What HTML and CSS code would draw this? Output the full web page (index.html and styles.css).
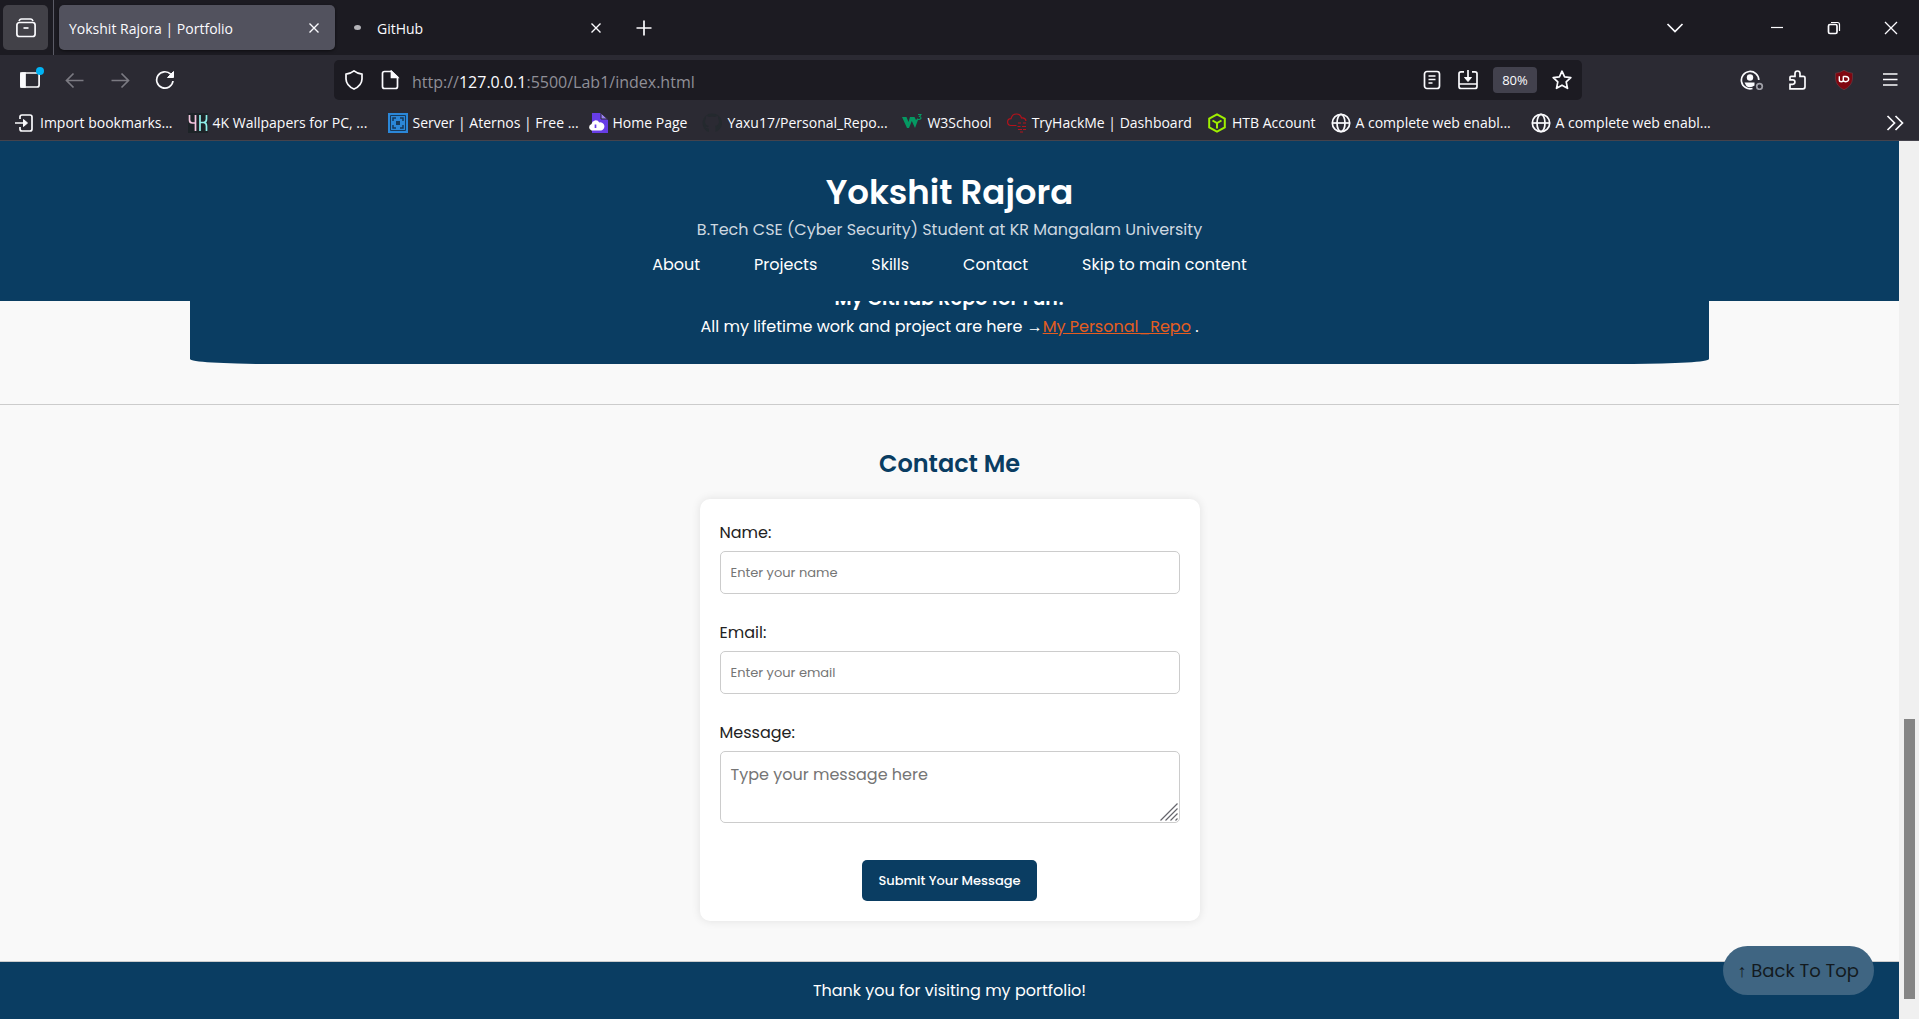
FILE: index.html
```html
<!DOCTYPE html>
<html lang="en">
<head>
<meta charset="utf-8">
<title>Yokshit Rajora | Portfolio</title>
<link rel="stylesheet" href="styles.css">
</head>
<body>
<div class="tabbar">
  <button class="view-btn" aria-label="Recent browsing"><svg class="icon" viewBox="0 0 20 20"><path d="M3 3.200Q3.500 .9 5.500 .9h9Q16.500.9 17 3.200" stroke-width="1.500"/><rect x=".9" y="4.500" width="18.200" height="14" rx="2.500"/><path d="M7.500 10h5"/></svg></button>
  <div class="tab tab-active"><button class="tab-title">Yokshit Rajora | Portfolio</button><button class="tab-close" aria-label="Close tab"><svg class="icon-s" viewBox="0 0 12 12"><path d="M1.500 1.500l9 9M10.500 1.500l-9 9"/></svg></button></div>
  <div class="tab"><span class="tab-dot"></span><button class="tab-title">GitHub</button><button class="tab-close" aria-label="Close tab"><svg class="icon-s" viewBox="0 0 12 12"><path d="M1.500 1.500l9 9M10.500 1.500l-9 9"/></svg></button></div>
  <button class="tool new-tab" aria-label="New tab"><svg class="icon" viewBox="0 0 20 20"><path d="M10 2.500v15M2.500 10h15"/></svg></button>
  <div class="window-controls">
    <button class="tool list-tabs" aria-label="List all tabs"><svg class="icon" viewBox="0 0 20 20"><path d="M2.500 6l7.500 7.500L17.500 6"/></svg></button>
    <button class="tool win" aria-label="Minimize"><svg class="icon" viewBox="0 0 20 20"><path d="M4 9.500h12" stroke-width="1.200"/></svg></button>
    <button class="tool win" aria-label="Restore"><svg class="icon" viewBox="0 0 20 20"><rect x="4.500" y="6.500" width="8.500" height="9" rx="1.500"/><path d="M7 4.500h6.500q2 0 2 2V13" stroke-width="1.200"/></svg></button>
    <button class="tool win" aria-label="Close window"><svg class="icon" viewBox="0 0 20 20"><path d="M4 4l12 12M16 4L4 16" stroke-width="1.300"/></svg></button>
  </div>
</div>

<div class="toolbar">
  <button class="tool sidebar-btn" aria-label="Sidebars"><svg class="icon" viewBox="0 0 20 20"><rect x=".9" y="3" width="18.200" height="14" rx="2"/><path d="M1 3h4v14H1z" fill="currentColor"/></svg><span class="badge-dot"></span></button>
  <button class="tool dim" aria-label="Back"><svg class="icon" viewBox="0 0 20 20"><path d="M18.500 10.500H1.500M8.500 3.500l-7 7 7 7"/></svg></button>
  <button class="tool dim" aria-label="Forward"><svg class="icon" viewBox="0 0 20 20"><path d="M1.500 10.500h17M11.500 3.500l7 7-7 7"/></svg></button>
  <button class="tool" aria-label="Reload"><svg class="icon" viewBox="0 0 20 20"><path d="M18 11a8.200 8.200 0 1 1-2.300-6.800"/><path d="M18.500 1.500v6h-6z" fill="currentColor" stroke-width="1"/></svg></button>
  <div class="urlbar">
    <button class="url-btn" aria-label="Tracking protection"><svg class="icon" viewBox="0 0 20 20"><path d="M10 .9Q14 4 18 4.200V9Q17.800 15.500 10 19.100 2.200 15.500 2 9V4.200Q6 4 10 .9z"/></svg></button>
    <button class="url-btn" aria-label="Site information"><svg class="icon" viewBox="0 0 20 20"><path d="M4.500 1.500h7l6 5.500v9.500q0 2-2 2h-11q-2 0-2-2v-13q0-2 2-2z"/><path d="M11.500 1.500l6 6h-6z" fill="currentColor"/></svg></button>
    <div class="url" role="textbox" aria-label="Address">http://<span class="host">127.0.0.1</span>:5500/Lab1/index.html</div>
    <button class="url-btn" aria-label="Reader view"><svg class="icon" viewBox="0 0 20 20"><rect x="2.500" y="1.500" width="15" height="17" rx="2.500"/><path d="M6.500 6h7M6.500 9.500h7M6.500 13h4"/></svg></button>
    <button class="url-btn" aria-label="Install"><svg class="icon" viewBox="0 0 20 20"><path d="M6 1.800H3q-2 0-2 2V16.500q0 2 2 2h14q2 0 2-2V3.800q0-2-2-2h-3M1 14h18M10 0v10"/><path d="M6.500 7.500L10 11.500l3.500-4z" fill="currentColor" stroke-width="1"/></svg></button>
    <button class="zoom">80%</button>
    <button class="url-btn" aria-label="Bookmark this page"><svg class="icon" viewBox="0 0 20 20"><path d="M10 1.200l2.600 5.700 6.200.7-4.600 4.300 1.300 6.400L10 15.200l-5.500 3.100 1.300-6.400L1.200 7.600l6.200-.7z" stroke-linejoin="round"/></svg></button>
  </div>
  <div class="toolbar-end">
    <button class="tool" aria-label="Account"><svg class="icon icon-account" viewBox="0 0 24 20"><path d="M12.500 18.500A8.700 8.700 0 1 1 18.800 10"/><circle cx="10" cy="7.500" r="3.200" fill="currentColor" stroke="none"/><path d="M4.500 12.500h10v3q-4 3-8 .8z" fill="currentColor" stroke="none"/><circle cx="19.500" cy="16.500" r="2.800" stroke="#a0a0a8"/></svg></button>
    <button class="tool" aria-label="Extensions"><svg class="icon" viewBox="0 0 20 20"><path d="M2 18.800v-4.500h2.700a2.200 2.200 0 0 0 0-4.400H2V7.300q0-1 1-1h4V3.500a2.500 2.500 0 0 1 5 0v2.800h3.500q1.500 0 1.500 1.500v9q0 2-2 2z"/></svg></button>
    <button class="tool" aria-label="uBlock Origin"><svg class="icon" viewBox="0 0 20 20"><path d="M10 .3Q14 3 18.500 3.200V9Q18 16 10 19.800 2 16 1.500 9V3.200Q6 3 10 .3z" fill="#800610" stroke="#6b4048" stroke-width=".6"/><path d="M5.300 6.300v3.700q0 1.800 2 1.800t2-1.800V6.300M9.300 6.500h2.200q3.200.2 3.200 2.600t-3 2.700q-1.800 0-2.400-1.500" stroke="#fff" stroke-width="1.400"/></svg></button>
    <button class="tool" aria-label="Menu"><svg class="icon" viewBox="0 0 20 20"><path d="M3 4h14.500M3 9.500h14.500M3 15h14.500"/></svg></button>
  </div>
</div>

<nav class="bookmarks" aria-label="Bookmarks">
  <a href="#"><svg class="icon" viewBox="0 0 20 20"><path d="M5 6V4q0-2 2-2h8q2 0 2 2v12q0 2-2 2H7q-2 0-2-2v-2M0 10h10"/><path d="M8.500 6.500l4 3.500-4 3.500z" fill="currentColor" stroke-width="1"/></svg>Import bookmarks...</a>
  <a class="long" href="#"><svg class="icon" viewBox="0 0 20 20"><path d="M0 0h20v20H0z" fill="#1d2327" stroke="none"/><path d="M1.500 2v5q0 3 3 3h2.500M7.500 2v16" stroke="#f4c6df"/><path d="M12 2v16M18.500 2v4q0 3.500-3 3.500H12M15.500 9.500q3 0 3 3.500v5" stroke="#8ff0ea"/></svg>4K Wallpapers for PC, ...</a>
  <a class="long" href="#"><svg class="icon" viewBox="0 0 20 20"><path d="M0 0h20v20H0z" fill="#2b87d8" stroke="none"/><path d="M2.500 2.500h15v15h-15z" stroke="#173a5c" stroke-width="1"/><path d="M5 8V5h3M12 5h3v3M15 12v3h-3M8 15H5v-3" stroke="#173a5c" stroke-width="1.500"/><path d="M8 8h4v4H8z" fill="#173a5c" stroke="none"/></svg>Server | Aternos | Free ...</a>
  <a href="#"><svg class="icon" viewBox="0 0 20 20"><path d="M4 0h9l7 7v13H4z" fill="#673de6" stroke="none"/><path d="M13 0v6h6.500z" fill="#9a80f0" stroke="#2b2a33" stroke-width="1"/><path d="M3.500 17.500a3.400 3.400 0 0 1 0-6.500 4.200 4.200 0 0 1 7.800-1.500 4 4 0 0 1 2 8z" fill="#fff" stroke="none"/><path d="M7.500 11.500v3.500" stroke="#673de6"/></svg>Home Page</a>
  <a class="long" href="#"><svg class="icon" viewBox="0 0 20 20"><path d="M10 .5a9.500 9.500 0 0 0-3 18.500v-3.500q-3 .5-4-2 3 1.500 4-.5-4-.5-4-4.500 0-2 1-3-.3-1.500.2-2.500 1.500 0 2.800 1 3-.8 6 0 1.300-1 2.800-1 .5 1 .2 2.500 1 1 1 3 0 4-4 4.500.5.500.5 2v4A9.500 9.500 0 0 0 10 .5z" fill="#24292e" stroke="none"/></svg>Yaxu17/Personal_Repo...</a>
  <a href="#"><svg class="icon" viewBox="0 0 20 20"><path d="M0 4h4.500l2 5 1.500-5h4.500l1.500 3 2-2v2l-3 8-3.200-7L7 15H5z" fill="#059862" stroke="none"/><path d="M16 1.500h3l-1.500 2q1.500 0 1.500 1.500T16 6.500" stroke="#059862" stroke-width="1.100"/></svg>W3School</a>
  <a href="#"><svg class="icon" viewBox="0 0 20 20"><path d="M9.500 12.500H4a3.400 3.400 0 0 1 0-6.800Q5 1 9.500 1q4 0 5 4 4-.5 4.500 3M11 10h3M16 10h3M10.500 13.500h3M15 13.500h4M11 16.500h4M16 16.500h3M13 19h3" stroke="#b5121b" stroke-width="1.200"/></svg>TryHackMe | Dashboard</a>
  <a href="#"><svg class="icon" viewBox="0 0 20 20"><path d="M10 1.300l7.800 4.300v8.800L10 18.700l-7.800-4.300V5.600zM5.500 7.500L10 10l4.500-2.500M10 10v5.500" stroke="#9fef00" stroke-width="2"/></svg>HTB Account</a>
  <a class="long" href="#"><svg class="icon" viewBox="0 0 20 20"><circle cx="10" cy="10" r="8.700"/><ellipse cx="10" cy="10" rx="4" ry="8.700"/><path d="M1.300 10h17.400"/></svg>A complete web enabl...</a>
  <a class="long" href="#"><svg class="icon" viewBox="0 0 20 20"><circle cx="10" cy="10" r="8.700"/><ellipse cx="10" cy="10" rx="4" ry="8.700"/><path d="M1.300 10h17.400"/></svg>A complete web enabl...</a>
  <button class="more" aria-label="More bookmarks"><svg class="icon" viewBox="0 0 20 20"><path d="M2.500 3l7 7-7 7M10.500 3l7 7-7 7"/></svg></button>
</nav>

<div class="viewport">
  <div class="page">
    <header class="site-header">
      <h1>Yokshit Rajora</h1>
      <p>B.Tech CSE (Cyber Security) Student at KR Mangalam University</p>
      <nav class="site-nav">
        <a href="#about">About</a>
        <a href="#projects">Projects</a>
        <a href="#skills">Skills</a>
        <a href="#contact">Contact</a>
        <a href="#main">Skip to main content</a>
      </nav>
    </header>
    <main id="main">
      <section class="repo">
        <h3>My GitHub Repo for Fun!</h3>
        <p>All my lifetime work and project are here →<a href="#repo">My Personal_Repo</a> .</p>
      </section>
      <section class="contact" id="contact">
        <h2>Contact Me</h2>
        <form class="contact-form">
          <label for="name">Name:</label>
          <input id="name" type="text" placeholder="Enter your name">
          <label for="email">Email:</label>
          <input id="email" type="email" placeholder="Enter your email">
          <label for="message">Message:</label>
          <div class="message-box">
            <textarea id="message" placeholder="Type your message here"></textarea>
            <svg class="grip" viewBox="0 0 18 18"><path d="M.5 17.500l17-17M5.500 17.500l12-12M10.500 17.500l7-7M15.500 17.500l2-2"/></svg>
          </div>
          <button type="submit">Submit Your Message</button>
        </form>
      </section>
    </main>
    <footer class="site-footer">Thank you for visiting my portfolio!</footer>
    <a class="to-top" href="#main">↑ Back To Top</a>
  </div>
  <div class="scrollbar"><div class="thumb"></div></div>
</div>
</body>
</html>
```
FILE: styles.css
```css
* { box-sizing: border-box; }

body {
  margin: 0;
  height: 100vh;
  display: flex;
  flex-direction: column;
  overflow: hidden;
  background: #2b2a33;
  color: #fbfbfe;
  font: 14px/20px "Segoe UI", "Open Sans", "Noto Sans", sans-serif;
}

button {
  border: 0;
  padding: 0;
  background: none;
  color: inherit;
  font: inherit;
}

a { color: inherit; text-decoration: none; }

.icon, .icon-s {
  display: block;
  flex: none;
  width: 20px;
  height: 20px;
  fill: none;
  stroke: currentColor;
  stroke-width: 1.7;
}
.icon-s { width: 12px; height: 12px; stroke-width: 1.4; }
.icon-account { width: 24px; }

/* Tab strip */
.tabbar {
  flex: none;
  display: flex;
  align-items: center;
  height: 55px;
  background: #1c1b22;
}
.view-btn {
  display: grid;
  place-items: center;
  width: 45px;
  height: 45px;
  margin-left: 3px;
  border-radius: 5px;
  background: #424148;
}
.tab {
  display: flex;
  align-items: center;
  width: 276px;
  height: 45px;
  padding: 0 13px 0 10px;
  border-radius: 5px;
}
.tab-active {
  position: relative;
  margin: 0 6px 0 11px;
  background: #52525e;
  box-shadow: 0 1px 3px #0008;
}
.tab-active::before {
  content: "";
  position: absolute;
  left: -6px;
  top: -5px;
  width: 1px;
  height: 55px;
  background: #5b5b66;
}
.tab-title { flex: 1; padding-top: 2px; text-align: left; white-space: nowrap; }
.tab-close { padding: 2px; }
.tab-dot {
  width: 7px;
  height: 5px;
  margin: 0 16px 0 3px;
  border-radius: 50%;
  background: #b4b4b9;
}
.tool {
  position: relative;
  display: grid;
  place-items: center;
  flex: none;
  width: 45px;
  height: 45px;
}
.new-tab { margin-left: 4px; }
.window-controls { display: flex; margin-left: auto; }
.list-tabs { margin-right: 51px; }
.win { width: 57px; }

/* Navigation toolbar */
.toolbar {
  flex: none;
  display: flex;
  align-items: center;
  height: 50px;
  padding: 0 6px 0 7px;
}
.toolbar-end { display: flex; }
.toolbar-end .tool { width: 46px; }
.dim { color: #7b7a82; }
.badge-dot {
  position: absolute;
  right: 8px;
  top: 9px;
  width: 8px;
  height: 8px;
  border-radius: 50%;
  background: #00b3f4;
}
.urlbar {
  flex: 1;
  display: flex;
  align-items: center;
  height: 40px;
  margin: 0 147px;
  padding: 0 2px;
  border-radius: 5px;
  background: #1c1b22;
}
.url-btn { display: grid; place-items: center; width: 36px; height: 36px; }
.url { flex: 1; padding: 3px 0 0 4px; font-size: 16px; color: #8f8f97; }
.host { color: #fbfbfe; }
.zoom {
  width: 44px;
  height: 26px;
  margin: 0 7px;
  border-radius: 4px;
  background: #42414d;
  font-size: 13px;
}

/* Bookmarks bar */
.bookmarks {
  flex: none;
  display: flex;
  align-items: center;
  gap: 15px;
  height: 36px;
  padding: 1px 14px 0 15px;
  border-bottom: 1px solid #45434c;
}
.bookmarks a { display: flex; align-items: center; gap: 5px; white-space: nowrap; }
.bookmarks .long { width: 185px; }
.more { margin-left: auto; }

/* Portfolio page */
.viewport { flex: 1; min-height: 0; display: flex; }
.page {
  position: relative;
  flex: 1;
  display: flex;
  flex-direction: column;
  overflow: hidden;
  background: #f9f9f9;
  color: #222;
  font: 16px/26px Poppins, "Liberation Sans", sans-serif;
}
h1, h2, h3, p { margin: 0; }

.site-header {
  position: relative;
  z-index: 1;
  flex: none;
  height: 160px;
  padding-top: 26px;
  background: #0a3d62;
  color: #fff;
  text-align: center;
}
.site-header h1 { font-size: 34px; line-height: 50px; font-weight: 600; }
.site-header p { color: #ced8e0; }
.site-nav { display: flex; justify-content: center; gap: 54px; margin-top: 9px; }

.repo {
  width: 80%;
  margin: -18px auto 0;
  padding-bottom: 24px;
  border-radius: 0 0 5% 5% / 0 0 5px 5px;
  background: #0a3d62;
  color: #fff;
  text-align: center;
}
.repo h3 { font-size: 19px; line-height: 31px; font-weight: 600; }
.repo a { color: #e55d20; text-decoration: underline; }

.contact {
  margin-top: 40px;
  padding: 40px 0;
  border: solid #ccc;
  border-width: 1px 0;
}
.contact h2 {
  margin-bottom: 17px;
  color: #0a3d62;
  font-size: 24px;
  line-height: 37px;
  font-weight: 600;
  text-align: center;
}
.contact-form {
  display: flex;
  flex-direction: column;
  width: 500px;
  margin: 0 auto;
  padding: 20px;
  border-radius: 10px;
  background: #fff;
  box-shadow: 0 0 10px #0000001a;
}
.contact-form label { margin-bottom: 5px; line-height: 27px; }
.contact-form input, .contact-form textarea {
  display: block;
  width: 100%;
  height: 43px;
  margin: 0 0 25px;
  padding: 10px;
  border: 1px solid #ccc;
  border-radius: 5px;
  background: #fff;
  color: #222;
  font: inherit;
  font-size: 13px;
}
.contact-form textarea { height: 72px; margin: 0; font-size: 16px; resize: none; }
.contact-form ::placeholder { color: #757575; opacity: 1; }
.message-box { position: relative; margin-bottom: 37px; }
.grip {
  position: absolute;
  right: 2px;
  bottom: 2px;
  width: 18px;
  height: 18px;
  stroke: #66666d;
  stroke-width: 1.2;
}
.contact-form button {
  align-self: center;
  height: 41px;
  padding: 0 16px;
  border-radius: 5px;
  background: #0a3d62;
  color: #fff;
  font-size: 13px;
  font-weight: 500;
}

.site-footer {
  flex: 1;
  padding-top: 16px;
  background: #0a3d62;
  color: #fff;
  text-align: center;
}
.to-top {
  position: absolute;
  right: 25px;
  bottom: 24px;
  padding: 12px 15px;
  border-radius: 25px;
  background: #3f6582;
  color: #131a20;
  font-size: 18px;
  line-height: 25px;
  white-space: nowrap;
}

.scrollbar {
  flex: none;
  display: flex;
  flex-direction: column;
  justify-content: flex-end;
  width: 20px;
  padding: 0 4px 20px 5px;
  background: #f0f0f0;
}
.thumb { height: 280px; background: #858585; }
```
